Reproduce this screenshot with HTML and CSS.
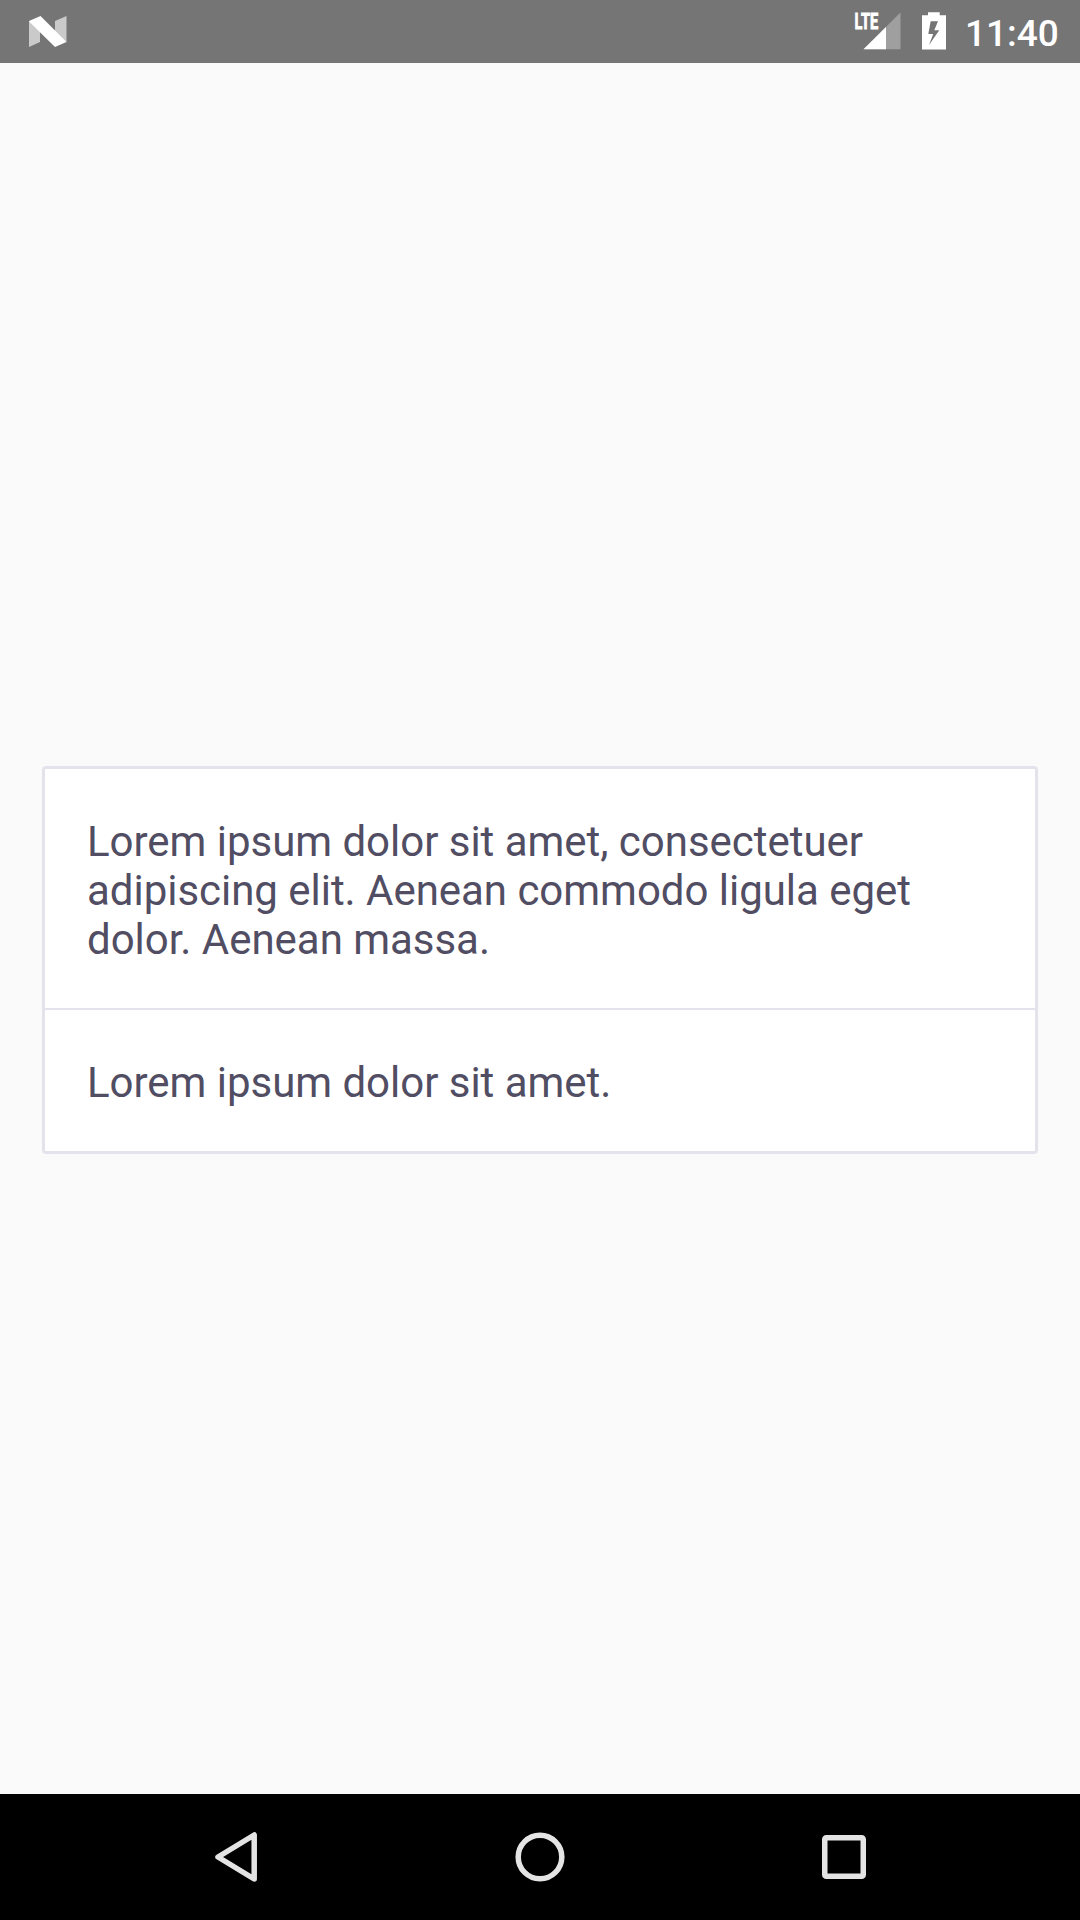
FILE: index.html
```html
<!DOCTYPE html>
<html lang="en">
<head>
<meta charset="utf-8">
<title>Messages</title>
<link rel="stylesheet" href="styles.css">
</head>
<body>
<div class="screen">
  <header class="status">
    <svg class="logo" width="38" height="31" viewBox="29 16 38 31">
      <path fill="#cacaca" d="M29 21.5V47L40 42V21zM55 21L66.5 16V42L55 37z"/>
      <path fill="#fff" d="M29 21L40.5 16L66.5 42L55 47L29 21.5z"/>
    </svg>
    <div class="indicators">
      <svg class="signal" width="51" height="50" viewBox="850 0 51 50">
        <path fill="#9f9f9f" d="M900.5 12.5V49.3H863.5z"/>
        <path fill="#fff" d="M886 27V49.3H863.5z"/>
        <text class="lte" transform="translate(854.6 29) scale(.65 1)">LTE</text>
      </svg>
      <svg class="battery" width="24" height="38" viewBox="922 12 24 38">
        <path fill="#fff" fill-rule="evenodd" d="M928 12.3H939.7V15.2H946V49.5H922V15.2H928zM930.7 21.3L928.3 34H933.2L929 45L939.3 30.3H934.3L938 21.3z"/>
      </svg>
      <time class="clock">11:40</time>
    </div>
  </header>
  <main class="content">
    <section class="card">
      <p class="row">Lorem ipsum dolor sit amet, consectetuer<br>adipiscing elit. Aenean commodo ligula eget<br>dolor. Aenean massa.</p>
      <p class="row">Lorem ipsum dolor sit amet.</p>
    </section>
  </main>
  <nav class="navbar">
    <svg class="nav-icon" width="50" height="50" viewBox="0 0 50 50"><path d="M43.2 3V47L7 25z"/></svg>
    <svg class="nav-icon" width="50" height="50" viewBox="0 0 50 50"><circle cx="25" cy="25" r="21.8"/></svg>
    <svg class="nav-icon" width="50" height="50" viewBox="0 0 50 50"><rect x="5.75" y="5.75" width="38.5" height="38.5" rx="1.5"/></svg>
  </nav>
</div>
</body>
</html>
```
FILE: styles.css
```css
* { box-sizing: border-box; }
body {
  margin: 0;
  font-family: Roboto, "Liberation Sans", sans-serif;
}
.screen {
  width: 1080px;
  height: 1920px;
  display: flex;
  flex-direction: column;
  background: #fafafa;
}
.status {
  height: 63px;
  flex: none;
  padding: 0 21px 0 29px;
  display: flex;
  justify-content: space-between;
  background: #757575;
}
svg { display: block; flex: none; }
.logo { margin-top: 16px; }
.indicators { display: flex; }
.battery { margin: 12px 0 0 21px; }
.lte {
  font-size: 22.5px;
  font-weight: 700;
  fill: #fff;
  stroke: #fff;
  stroke-width: .9;
}
.clock {
  width: 94px;
  margin-left: 19px;
  padding-top: 12px;
  font-size: 37px;
  font-weight: 500;
  line-height: 43px;
  color: #fff;
}
.content {
  flex: 1;
  padding: 703px 42px 0;
}
.card {
  background: #fff;
  border: 3px solid #e4e3eb;
  border-radius: 4px;
}
.row {
  margin: 0;
  padding: 48px 42px 44px;
  font-size: 42px;
  line-height: 49px;
  letter-spacing: -0.03px;
  color: #514d63;
}
.row + .row { border-top: 2px solid #e4e3eb; }
.navbar {
  height: 126px;
  flex: none;
  display: flex;
  justify-content: center;
  align-items: center;
  gap: 254px;
  background: #000;
}
.nav-icon {
  fill: none;
  stroke: #e4e4e4;
  stroke-width: 5.5;
  stroke-linejoin: round;
}
```
